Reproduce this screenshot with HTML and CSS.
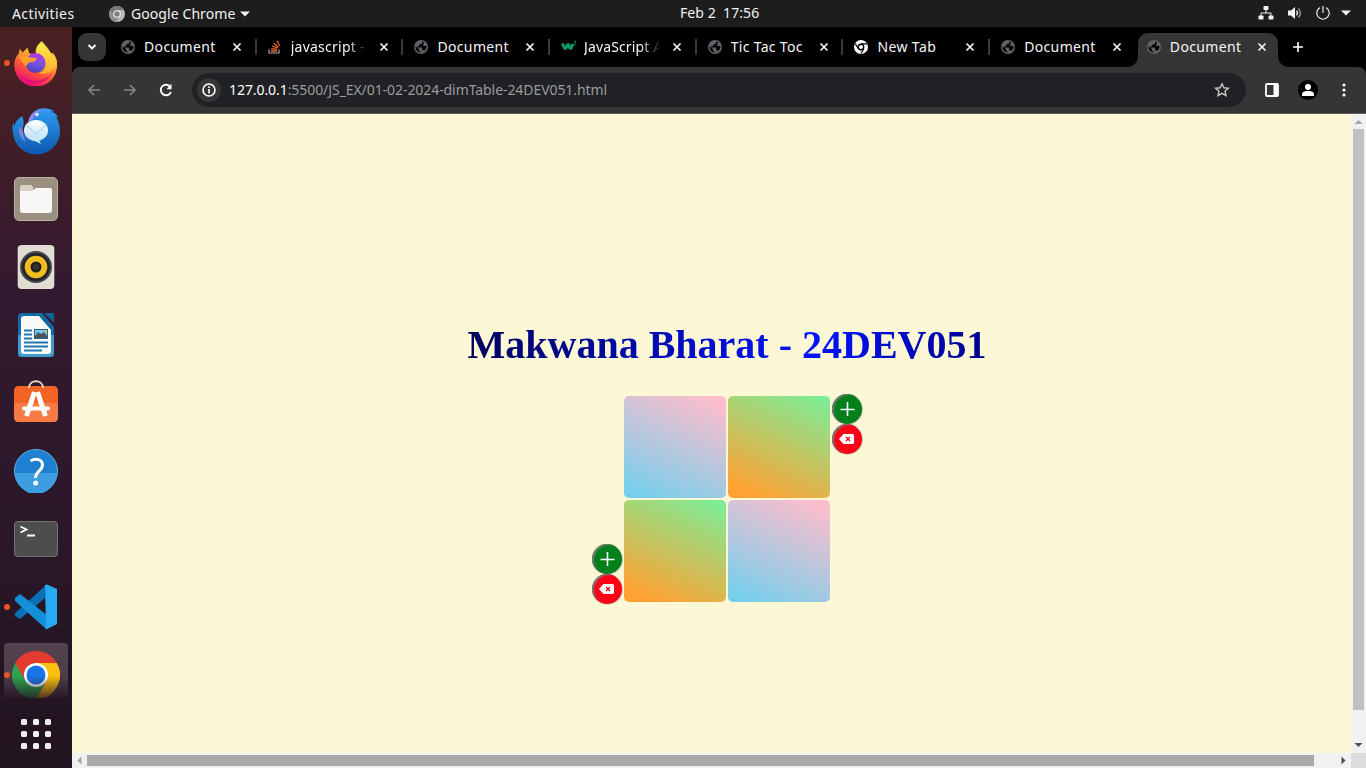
FILE: index.html
```html
<!DOCTYPE html>
<html lang="en">
<head>
<meta charset="utf-8">
<title>Document</title>
<link rel="stylesheet" href="styles.css">
</head>
<body>
<svg class="defs" width="0" height="0">
  <defs>
    <linearGradient id="ffBody" x1=".8" y1="0" x2=".3" y2="1"><stop offset="0" stop-color="#fff04a"/><stop offset=".35" stop-color="#ffb52e"/><stop offset=".65" stop-color="#ff5535"/><stop offset="1" stop-color="#e8067f"/></linearGradient>
    <linearGradient id="ffOrb" x1=".6" y1="0" x2=".4" y2="1"><stop offset="0" stop-color="#b833e1"/><stop offset=".5" stop-color="#7a55e0"/><stop offset="1" stop-color="#4b3db8"/></linearGradient>
    <linearGradient id="ffTail" x1="0" y1="0" x2="0" y2="1"><stop offset="0" stop-color="#fff34f"/><stop offset="1" stop-color="#ffae2c"/></linearGradient>
    <linearGradient id="tb" x1="0" y1="0" x2="0" y2="1"><stop offset="0" stop-color="#2f9cf4"/><stop offset="1" stop-color="#0c58ad"/></linearGradient>
    <linearGradient id="mail" x1="0" y1="0" x2="0" y2="1"><stop offset="0" stop-color="#fff"/><stop offset="1" stop-color="#b9e0fb"/></linearGradient>
    <linearGradient id="fade" x1="0" y1="0" x2="0" y2="1"><stop offset=".52" stop-color="#241523" stop-opacity="0"/><stop offset="1" stop-color="#241523" stop-opacity=".85"/></linearGradient>
    <symbol id="globe" viewBox="0 0 14 14"><circle cx="7" cy="7" r="7" fill="#5f6368"/><path class="cut" d="M8 1.500v1.400c0 .8-.6 1.400-1.400 1.400H5.300v1.200c0 .5-.4.8-.8.8H3.300v1.300h4c.5 0 .8.400.8.800v1.800h.8c.6 0 1.100.4 1.200.9A5.500 5.500 0 0 0 12.500 7c0-.4 0-.8-.1-1.100H9.600L8.300 4.800h1.400V2.200A5.600 5.600 0 0 0 8 1.500zM1.500 6.300c-.3 3.100 2 5.900 4.900 6.200v-1.200c-.8 0-1.400-.6-1.400-1.400v-.6z"/></symbol>
    <symbol id="x" viewBox="0 0 10 10"><path d="M1.500 1.500l7 7m0-7l-7 7" stroke="currentColor" stroke-width="1.700" fill="none"/></symbol>
    <symbol id="chromeMono" viewBox="0 0 16 16"><circle cx="8" cy="8" r="8" fill="#b9b9b9"/><path d="M8 8L1.100 4A8 8 0 0 0 7.500 16L11 9.700z" fill="#8d8d8d"/><path d="M8 8h-3.500L1.100 4A8 8 0 0 1 15 4H8z" fill="#777"/><circle cx="8" cy="8" r="3.800" fill="#f0f0f0"/><circle cx="8" cy="8" r="2.700" fill="#7e7e7e"/></symbol>
  </defs>
</svg>

<header class="topbar">
  <div class="tb-left">
    <span class="activities">Activities</span>
    <svg class="app-ico" width="16" height="16"><use href="#chromeMono"/></svg>
    <span class="appname">Google Chrome</span>
    <svg class="caret" width="10" height="6"><path d="M0 .5h10L5 5.500z" fill="#f2f2f2"/></svg>
  </div>
  <div class="clock">Feb 2&nbsp; 17:56</div>
  <div class="tb-right">
    <svg width="16" height="14" viewBox="0 0 16 14" fill="#f2f2f2"><rect x="5.500" y="0" width="5" height="4" rx=".8"/><rect x="0.500" y="9.500" width="5" height="4" rx=".8"/><rect x="10.500" y="9.500" width="5" height="4" rx=".8"/><path d="M3 10V7h10v3M8 4v3" fill="none" stroke="#f2f2f2"/></svg>
    <svg width="16" height="14" viewBox="0 0 16 14"><path d="M1 4.500h3L8 1v12L4 9.500H1z" fill="#f2f2f2"/><path d="M9.500 4.800c1.200 1.300 1.200 3.100 0 4.400" fill="none" stroke="#f2f2f2" stroke-width="1.300"/><path d="M11.500 2.500c2.400 2.500 2.400 6.500 0 9" fill="none" stroke="#aaa" stroke-width="1.200"/></svg>
    <svg width="14" height="14" viewBox="0 0 14 14"><path d="M4 1.600a6.200 6.200 0 1 0 6 0M7 0v7" fill="none" stroke="#e8e8e8" stroke-width="1.200"/></svg>
    <svg width="10" height="6"><path d="M0 .5h10L5 5.500z" fill="#f2f2f2"/></svg>
  </div>
</header>

<div class="desktop">
  <nav class="dock">
    <div class="slot run"><svg width="46" height="46" viewBox="0 0 48 48"><path d="M29 2c4 3 6 6 7 9 2 0 4 3 4 3 4 4 6 8 6 12a22.300 22.300 0 0 1-44.600 1C1 22 3 17 6 14l1-5 3 4 5-5 2 6c3 0 5 1 7 2 0-5 2-10 6-13z" fill="url(#ffBody)"/><path d="M30 1c-6 5-7 9-6 14l10 7c1 6-2 11-7 13 9 2 18-4 19-13-1-4-3-7-5-9l-1 3c-1-6-6-10-10-15z" fill="url(#ffTail)" opacity=".9"/><circle cx="23.500" cy="24" r="10.500" fill="url(#ffOrb)"/><path d="M6 18c4-2 8-2 11 0l8 1c-1 3-4 4-7 4-3 1-4 3-4 5-3-2-5-7-8-10z" fill="#ffa02b"/><path d="M3 31c6 12 27 17 38 3-6 14-28 17-38-3z" fill="#df0a80" opacity=".75"/></svg></div>
    <div class="slot"><svg width="48" height="48" viewBox="0 0 48 48"><path d="M17 12c4-12 17-13 25-8l-3 1c4 0 6 3 7 6l-2-1c3 4 4 9 4 14a23 22.500 0 0 1-47 1C0 22 0 18 2 16v4c1-5 4-8 8-11 2 4 2 7 1 11-1 4 1 8 4 10z" fill="url(#tb)"/><path d="M16 15c2-9 10-13 18-12-6 0-11 3-13 9z" fill="#a184e5"/><circle cx="25" cy="7.500" r="1.800" fill="#d7efff"/><path d="M7 20c-1 7 2 12 7 15-2-4-3-6-3-12z" fill="#7c83dc"/><ellipse cx="24" cy="23.500" rx="12" ry="10.500" fill="url(#mail)"/><path d="M14 18l10 9 10-9" fill="none" stroke="#b9d8f5" stroke-width="1.500"/><path d="M17 31l12 6-3-6z" fill="#c7e6fb"/></svg></div>
    <div class="slot"><svg width="44" height="44" viewBox="0 0 44 44"><rect x=".5" y=".5" width="43" height="43" rx="4.500" fill="#999080" stroke="#b8b1a2"/><path d="M6 10a2 2 0 0 1 2-2h9l3 3h-1v8H6z" fill="#d9d3c6"/><path d="M6 14h12l4-3h14a2 2 0 0 1 2 2v20a3 3 0 0 1-3 3H9a3 3 0 0 1-3-3z" fill="#f8f7f5"/></svg></div>
    <div class="slot"><svg width="38" height="46" viewBox="0 0 38 46"><rect x=".7" y="1" width="36.600" height="44" rx="4" fill="#e2ddd3"/><circle cx="19" cy="23" r="16" fill="#454850"/><circle cx="19" cy="23" r="14" fill="#23242b"/><circle cx="19" cy="23" r="11.300" fill="#f1bd1c"/><circle cx="19" cy="23" r="5.500" fill="#202020"/><circle cx="19" cy="23" r="3" fill="#343434"/></svg></div>
    <div class="slot"><svg width="38" height="46" viewBox="0 0 38 46"><path d="M5 1h20l12 14v26a4 4 0 0 1-4 4H5a4 4 0 0 1-4-4V5a4 4 0 0 1 4-4z" fill="#0f6ba6"/><path d="M1 23h36v18a4 4 0 0 1-4 4H5a4 4 0 0 1-4-4z" fill="#3f9cc8"/><path d="M27 1h8q2 0 2 2v8z" fill="#0f6393"/><path d="M7 4h15l12 14v21q0 3-3 3H7q-3 0-3-3V7q0-3 3-3z" fill="#fafafa"/><path d="M7 18.500h8M7 22.500h8M7 26.500h8M7 30.500h24M7 34.500h24M7 38.500h18" stroke="#1d76ad" stroke-width="2"/><rect x="17.500" y="17.500" width="13" height="9" fill="#7ac3ed" stroke="#1d6791"/><path d="M18 26v-2l3-4 3 2 3-2 3 4v2z" fill="#525558"/><path d="M27 18h3v3z" fill="#f8c73a"/></svg></div>
    <div class="slot store"><svg width="44" height="46" viewBox="0 0 44 46"><rect x="0" y="8" width="44" height="36" rx="4.500" fill="#f26326"/><path d="M0 25h44v14.500a4.500 4.500 0 0 1-4.500 4.500h-35A4.500 4.500 0 0 1 0 39.500z" fill="#f77b45"/><path d="M15 10c0-9 14-9 14 0" fill="none" stroke="#ead9b6" stroke-width="2"/><path d="M20.500 14L12.500 38m11-24l8 24" fill="none" stroke="#fff" stroke-width="5"/><path d="M10 30.500h24" stroke="#fff" stroke-width="4" stroke-linecap="round"/></svg></div>
    <div class="slot"><svg width="44" height="44" viewBox="0 0 44 44"><circle cx="22" cy="22" r="21.500" fill="#1f7fd0" stroke="#5eb3e8"/><path d="M1 24h42a21 21 0 0 1-42 0z" fill="#3c9de1"/><path d="M16.500 12c5-3 12-2 12 4 0 6-7 6-7 13" fill="none" stroke="#fff" stroke-width="3"/><circle cx="21.700" cy="34" r="2.500" fill="#fff"/></svg></div>
    <div class="slot"><svg width="44" height="36" viewBox="0 0 44 36"><rect x=".5" y=".5" width="43" height="35" rx="3.500" fill="#4d4d4d" stroke="#737373"/><path d="M6.500 5.500l6 3-6 3M13 14.500h8" fill="none" stroke="#fff" stroke-width="1.800"/></svg></div>
    <div class="slot run"><svg width="44" height="46" viewBox="0 0 44 46"><path d="M1 29L31 2v12L6 35l-5-3z" fill="#0870b3"/><path d="M1 14l5-4 28 22-2 13L1 17z" fill="#1390d8"/><path d="M31 1l2-.5L43 5v35l-11 5.500z" fill="#27a9f3"/></svg></div>
    <div class="slot run active"><svg width="48" height="48" viewBox="0 0 48 48"><path d="M24 24L3.200 12A24 24 0 0 0 24 48l10.400-18z" fill="#2da351"/><path d="M24 48a24 24 0 0 0 20.800-36H24l10.400 18z" fill="#fbbf10"/><path d="M3.200 12a24 24 0 0 1 41.600 0H24a12 12 0 0 0-10.400 18z" fill="#e33b2e"/><circle cx="24" cy="24" r="12" fill="#fff"/><circle cx="24" cy="24" r="9.500" fill="#1b73e8"/><circle cx="24" cy="24" r="24.500" fill="url(#fade)"/></svg></div>
    <div class="apps"><i></i><i></i><i></i><i></i><i></i><i></i><i></i><i></i><i></i></div>
  </nav>

  <section class="browser">
    <div class="tabs">
      <div class="tabsearch"><svg width="10" height="8"><path d="M1.500 2l3.500 3.500L8.500 2" fill="none" stroke="#fff" stroke-width="1.800"/></svg></div>
      <div class="tab"><svg class="fav"><use href="#globe"/></svg><span class="t doc">Document</span><svg class="close"><use href="#x"/></svg></div>
      <div class="tab"><svg class="fav" viewBox="0 0 14 14"><path d="M1 9.500V13h10V9.500" fill="none" stroke="#a7a7a7" stroke-width="1.200"/><path d="M3 11h6M3.200 8.600l5.900.8M4 6l5.600 2M6 3.200l4.300 4M9 .8l2.600 5" stroke="#f06a27" stroke-width="1.300"/></svg><span class="t js fadeout">javascript - </span><svg class="close"><use href="#x"/></svg></div>
      <div class="tab"><svg class="fav"><use href="#globe"/></svg><span class="t doc">Document</span><svg class="close"><use href="#x"/></svg></div>
      <div class="tab"><svg class="fav w3" viewBox="0 0 16 14"><path d="M1.200 3.500l3 5.500L7 4l2.500 5 2.600-5" fill="none" stroke="#0a9b65" stroke-width="2.900" stroke-linejoin="bevel"/><path d="M13 1.200h2l-1.200 1.500q1.300.2 1 1.300-.3.900-1.800.6" fill="none" stroke="#0a9b65" stroke-width=".8"/></svg><span class="t jst fadeout">JavaScript A</span><svg class="close"><use href="#x"/></svg></div>
      <div class="tab"><svg class="fav"><use href="#globe"/></svg><span class="t ttt">Tic Tac Toc</span><svg class="close"><use href="#x"/></svg></div>
      <div class="tab"><svg class="fav" viewBox="0 0 14 14"><circle cx="7" cy="7" r="7" fill="#fff"/><circle cx="7" cy="7" r="2.700" fill="#fff" stroke="#000" stroke-width="1.400"/><path d="M7 3.800h6M4.200 8.500L1.300 3.600M9.800 8.600L7 13.500" stroke="#000" stroke-width="1.200"/></svg><span class="t nt">New Tab</span><svg class="close"><use href="#x"/></svg></div>
      <div class="tab last"><svg class="fav"><use href="#globe"/></svg><span class="t doc">Document</span><svg class="close"><use href="#x"/></svg></div>
      <div class="tab current"><svg class="fav"><use href="#globe"/></svg><span class="t doc">Document</span><svg class="close"><use href="#x"/></svg></div>
      <svg class="plus" width="12" height="12"><path d="M6 1v10M1 6h10" stroke="#fff" stroke-width="1.600"/></svg>
    </div>
    <div class="toolbar">
      <svg class="back" width="14" height="12"><path d="M13 6H2M7 1L2 6l5 5" fill="none" stroke="#868686" stroke-width="1.600"/></svg>
      <svg class="fwd" width="14" height="12"><path d="M1 6h11M7 1l5 5-5 5" fill="none" stroke="#868686" stroke-width="1.600"/></svg>
      <svg class="reload" width="14" height="14"><path d="M12 9a5.300 5.300 0 1 1-.4-4.800" fill="none" stroke="#fff" stroke-width="1.900"/><path d="M12.500 .8v5.400H7.500z" fill="#fff"/></svg>
      <div class="omnibox">
        <div class="info"><svg width="14" height="14"><circle cx="7" cy="7" r="6" fill="none" stroke="#fff" stroke-width="1.600"/><path d="M7 6v4.500M7 3.300v1.700" stroke="#fff" stroke-width="1.600"/></svg></div>
        <div class="url"><b>127.0.0.1</b><span>:5500/JS_EX/01-02-2024-dimTable-24DEV051.html</span></div>
        <svg class="star" width="16" height="16" viewBox="0 0 16 16"><path d="M8 1.800l1.900 4 4.500.4-3.400 3 1 4.400L8 11.300l-4 2.300 1-4.400-3.400-3 4.500-.4z" fill="none" stroke="#c7c7c7" stroke-width="1.400"/></svg>
      </div>
      <svg class="panel" width="14" height="14"><rect x="1" y="1" width="12" height="12" rx="1" fill="none" stroke="#fff" stroke-width="1.800"/><path d="M8.500 1H13v12H8.500z" fill="#fff"/></svg>
      <svg class="user" width="20" height="20"><circle cx="10" cy="10" r="10" fill="#000"/><circle cx="10" cy="7" r="3" fill="#fff"/><path d="M4 16v-2c0-2.500 4-3 6-3s6 .5 6 3v2z" fill="#fff"/></svg>
      <svg class="dots" width="4" height="14" fill="#fff"><circle cx="2" cy="2" r="1.600"/><circle cx="2" cy="7" r="1.600"/><circle cx="2" cy="12" r="1.600"/></svg>
    </div>
    <div class="viewport">
      <main class="page">
        <div class="inner">
          <h1>Makwana Bharat - 24DEV051</h1>
          <div class="board">
            <div class="ctl bottom"><button class="add"><svg width="15" height="15"><path d="M7.500 0v14M.5 7.500h14" stroke="#fff" stroke-width="1.600"/></svg></button><button class="del"><svg width="15" height="10"><path d="M0 5l4.500-5H13.500Q15 0 15 1.500v7Q15 10 13.500 10H4.500z" fill="#fff"/><path d="M7 3l4 4m0-4L7 7" stroke="#f00018" stroke-width="1.300"/></svg></button></div>
            <div class="cells"><i class="a"></i><i class="b"></i><i class="b"></i><i class="a"></i></div>
            <div class="ctl"><button class="add"><svg width="15" height="15"><path d="M7.500 0v14M.5 7.500h14" stroke="#fff" stroke-width="1.600"/></svg></button><button class="del"><svg width="15" height="10"><path d="M0 5l4.500-5H13.500Q15 0 15 1.500v7Q15 10 13.500 10H4.500z" fill="#fff"/><path d="M7 3l4 4m0-4L7 7" stroke="#f00018" stroke-width="1.300"/></svg></button></div>
          </div>
        </div>
      </main>
      <div class="vbar"><svg width="15" height="15"><path d="M3.500 10h8l-4-4z" fill="#a3a3a3"/></svg><div class="vthumb"></div><svg width="15" height="15"><path d="M3.500 5h8l-4 4z" fill="#505050"/></svg></div>
      <div class="hbar"><svg width="15" height="15"><path d="M9.500 3.500v8l-4-4z" fill="#a3a3a3"/></svg><div class="hthumb"></div><svg width="15" height="15"><path d="M5.500 3.500v8l4-4z" fill="#505050"/></svg></div>
      <div class="corner"></div>
    </div>
  </section>
</div>
</body>
</html>
```
FILE: styles.css
```css
* { box-sizing: border-box; }
body { margin: 0; width: 1366px; height: 768px; overflow: hidden; font-family: "Noto Sans", "Open Sans", sans-serif; background: #1d1d1d; display: flex; flex-direction: column; }
svg { display: block; flex: none; }
.defs { position: absolute; }
.topbar { height: 27px; background: #1d1d1d; color: #f2f2f2; font-size: 14px; line-height: 26px; display: grid; grid-template-columns: 680px 82px 604px; white-space: nowrap; }
.tb-left { display: flex; align-items: center; padding-left: 12px; }
.activities { width: 97px; letter-spacing: .42px; }
.appname { width: 104px; margin-left: 6px; letter-spacing: .08px; }
.caret { margin-left: 5px; }
.clock { letter-spacing: .06px; }
.tb-right { display: flex; align-items: center; justify-content: flex-end; gap: 13px; padding: 0 15px 1px 0; }
.tb-right svg:nth-child(-n+3) { transform: translateX(2px); }
.desktop { display: flex; flex: 1; min-height: 0; }

.dock { width: 72px; padding: 2px 4px 0; background: linear-gradient(#4b2022, #3e1d2a 20%, #341a30 35%, #2a1729 70%, #22141f); display: flex; flex-direction: column; }
.slot { height: 68px; width: 64px; flex: none; display: flex; align-items: center; justify-content: center; position: relative; }
.slot.store { padding-bottom: 4px; }
.slot.run::before { content: ""; position: absolute; left: 0; top: 31px; width: 6px; height: 6px; border-radius: 3px; background: #e95420; }
.slot.active { height: 55px; margin-top: 2px; padding-top: 8px; align-items: flex-start; overflow: hidden; border-radius: 4px 4px 0 0; background: linear-gradient(#54434f 0, #4d3c49 60%, #2a1a28 100%); }
.slot.active::before { top: 29px; }
.apps { display: grid; grid-template-columns: repeat(3, 6px); gap: 6px; justify-content: center; margin-top: 21px; }
.apps i { height: 6px; border-radius: 1.5px; background: #f2f0f0; }

.browser { flex: 1; min-width: 0; display: flex; flex-direction: column; background: #000; }
.tabs { height: 40px; display: flex; align-items: center; padding-left: 6px; color: #f5f5f5; }
.tabsearch { width: 28px; height: 28px; border-radius: 9px; background: #353535; display: flex; align-items: center; justify-content: center; margin-right: 3px; }
.tab { width: 146.7px; height: 34px; flex: none; display: flex; align-items: center; padding-left: 12px; position: relative; }
.tab::after { content: ""; position: absolute; right: -1px; top: 9px; width: 2px; height: 16px; background: #3a3a3a; }
.tab.last::after, .tab.current::after { display: none; }
.fav { width: 14px; height: 14px; margin-right: 9px; }
.fav.w3 { width: 16px; margin-right: 7px; }
.cut { fill: #000; }
.t { width: 88px; font-size: 14px; line-height: 20px; white-space: nowrap; overflow: hidden; }
.doc { letter-spacing: .36px; }
.js { letter-spacing: .25px; }
.jst { letter-spacing: .12px; }
.ttt { letter-spacing: .3px; }
.nt { letter-spacing: .38px; }
.fadeout { width: 78px; margin-right: 10px; -webkit-mask-image: linear-gradient(90deg, #000 72%, transparent 98%); mask-image: linear-gradient(90deg, #000 72%, transparent 98%); }
.close { width: 10px; height: 10px; }
.tab.current { width: 140px; padding: 0 0 6px 9px; margin: 6px 0 0 2px; background: #353535; border-radius: 10px 10px 0 0; }
.tab.current::before { content: ""; position: absolute; left: -10px; right: -10px; bottom: 0; height: 10px; background: radial-gradient(circle at 0 0, transparent 9.5px, #353535 10px) left / 10px 10px no-repeat, radial-gradient(circle at 100% 0, transparent 9.5px, #353535 10px) right / 10px 10px no-repeat; }
.tab.current .t { width: 87px; }
.plus { margin-left: 14px; }

.toolbar { height: 47px; background: #353535; border-bottom: 1px solid #5a5a5a; border-radius: 8px 8px 0 0; display: flex; align-items: center; padding: 0 20px 1px 15px; }
.fwd { margin-left: 22px; }
.reload { margin-left: 22px; }
.omnibox { width: 1054px; height: 34px; border-radius: 17px; margin-left: 19px; background: #202124; display: flex; align-items: center; padding-left: 5px; }
.info { width: 24px; height: 24px; border-radius: 12px; background: #353535; display: flex; align-items: center; justify-content: center; }
.url { margin-left: 8px; flex: 1; font-size: 14px; line-height: 20px; color: #9a9b9c; white-space: nowrap; letter-spacing: -.07px; }
.url b { font-weight: 400; color: #fff; }
.star { margin-right: 16px; }
.panel { margin-left: 19px; }
.user { margin-left: 19px; }
.dots { margin-left: 24px; }

.viewport { flex: 1; min-height: 0; display: grid; grid-template-columns: 1279px 15px; grid-template-rows: 639px 15px; background: #f1f1f1; }
.page { overflow: hidden; background: #fcf8d5; }
.inner { width: 1310px; padding-top: 208px; display: flex; flex-direction: column; align-items: center; }
h1 { margin: 0; font: bold 40px/46px "Liberation Serif", serif; background: linear-gradient(105deg, #000058, #0014ff 66%, #000088); -webkit-background-clip: text; background-clip: text; color: transparent; white-space: nowrap; }
.board { display: flex; gap: 2px; margin-top: 26px; height: 210px; }
.ctl { display: flex; flex-direction: column; }
.ctl.bottom { justify-content: flex-end; }
.ctl button { width: 30px; height: 30px; padding: 0; border: 0; border-radius: 50%; display: flex; align-items: center; justify-content: center; box-shadow: inset 2px 1px 1px #777, .5px .5px 1px #777a; }
.add { background: #00801a; }
.ctl .del { background: #ff0018; padding-right: 1px; }
.cells { display: grid; grid-template-columns: 102px 102px; grid-auto-rows: 102px; gap: 2px; padding-top: 2px; }
.cells i { border-radius: 5px; }
.a { background: linear-gradient(25deg, #72d0ed 3%, #ffbdcc 95%); }
.b { background: linear-gradient(25deg, #ffa233 10%, #78f09a); }
.vbar { display: flex; flex-direction: column; justify-content: space-between; }
.vthumb { width: 11px; height: 581px; margin: 0 0 auto 2px; background: #c1c1c1; }
.hbar { display: flex; justify-content: space-between; }
.hthumb { width: 1227px; height: 11px; margin: 2px auto 0 0; background: #a8a8a8; }
.corner { background: #dcdcdc; }
```
